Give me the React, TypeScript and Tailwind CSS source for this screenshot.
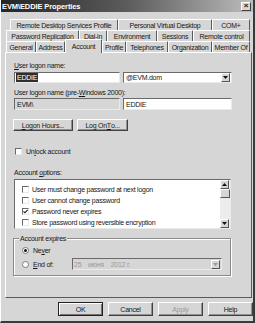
import React from 'react';

const font = "font-['Liberation_Sans',Arial,sans-serif]";

type Tab = { label: string; w: string; active?: boolean };

const row1: Tab[] = [
  { label: 'Remote Desktop Services Profile', w: 'w-[108px]' },
  { label: 'Personal Virtual Desktop', w: 'w-[94px]' },
  { label: 'COM+', w: 'w-[38px]' },
];
const row2: Tab[] = [
  { label: 'Password Replication', w: 'w-[73px]' },
  { label: 'Dial-in', w: 'w-[28px]' },
  { label: 'Environment', w: 'w-[50px]' },
  { label: 'Sessions', w: 'w-[36px]' },
  { label: 'Remote control', w: 'w-[57px]' },
];
const row3: Tab[] = [
  { label: 'General', w: 'w-[30px]' },
  { label: 'Address', w: 'w-[29px]' },
  { label: 'Account', w: 'w-[37px]', active: true },
  { label: 'Profile', w: 'w-[24px]' },
  { label: 'Telephones', w: 'w-[42px]' },
  { label: 'Organization', w: 'w-[44px]' },
  { label: 'Member Of', w: 'w-[38px]' },
];

function TabRow({ tabs, pad }: { tabs: Tab[]; pad: string }) {
  return (
    <div className={`flex h-[11px] ${pad}`}>
      {tabs.map((t) => (
        <div
          key={t.label}
          className={`${t.w} shrink-0 flex items-center justify-center whitespace-nowrap border-t border-l border-white border-r border-r-[#5a5a5a] rounded-t-[1px] ${
            t.active ? 'relative -mt-[2px] h-[14px] z-10 bg-[#d6d6d6]' : 'h-[11px]'
          }`}
        >
          {t.label}
        </div>
      ))}
    </div>
  );
}

function Check({ checked }: { checked?: boolean }) {
  return (
    <span className="w-[7px] h-[7px] shrink-0 bg-white border border-t-[#6a6a6a] border-l-[#6a6a6a] border-r-[#e8e8e8] border-b-[#e8e8e8] flex items-center justify-center">
      {checked && (
        <svg width="5" height="5" viewBox="0 0 5 5">
          <path d="M0.5 2.3 L2 3.8 L4.6 0.8" stroke="#111" strokeWidth="1.1" fill="none" />
        </svg>
      )}
    </span>
  );
}

function Radio({ on }: { on?: boolean }) {
  return (
    <span className="w-[7px] h-[7px] shrink-0 rounded-full bg-white border border-[#7a7a7a] flex items-center justify-center">
      {on && <span className="w-[3px] h-[3px] rounded-full bg-[#111]" />}
    </span>
  );
}

function Arrow({ dir, disabled }: { dir: 'up' | 'down'; disabled?: boolean }) {
  return (
    <span className="w-[9px] h-[9px] shrink-0 bg-[#d6d6d6] border border-t-white border-l-white border-r-[#555] border-b-[#555] flex items-center justify-center">
      <svg width="5" height="3" viewBox="0 0 5 3">
        <path d={dir === 'down' ? 'M0 0 H5 L2.5 3 Z' : 'M0 3 H5 L2.5 0 Z'} fill={disabled ? '#999' : '#111'} />
      </svg>
    </span>
  );
}

function Btn({ children, w, def, disabled }: { children: React.ReactNode; w: string; def?: boolean; disabled?: boolean }) {
  return (
    <div
      className={`${w} h-full shrink-0 flex items-center justify-center bg-[#d6d6d6] ${
        def ? 'border border-[#222] shadow-[inset_1px_1px_0_#fff,inset_-1px_-1px_0_#707070]' : 'border border-t-white border-l-white border-r-[#404040] border-b-[#404040] shadow-[inset_-1px_-1px_0_#909090]'
      } ${disabled ? 'text-[#9a9a9a]' : ''}`}
    >
      {children}
    </div>
  );
}

export default function App() {
  return (
    <div className={`w-[255px] h-[323px] overflow-hidden bg-[#d6d6d6] text-[7px] leading-[9px] tracking-[-0.25px] text-[#161616] ${font} flex flex-col border-l border-white border-r-2 border-r-[#3a3a3a] border-b-2 border-b-[#3a3a3a]`}>
      {/* title bar */}
      <div className="h-[12px] shrink-0 flex items-center justify-between pl-[1px] pr-[2px] bg-gradient-to-r from-[#262626] via-[#5c5c5c] to-[#bdbdbd]">
        <span className="text-white font-bold text-[7.5px] tracking-[-0.1px]">EVM\EDDIE Properties</span>
        <span className="w-[10px] h-[9px] bg-[#d6d6d6] border border-t-white border-l-white border-r-[#404040] border-b-[#404040] flex items-center justify-center font-bold text-[8px] leading-none">×</span>
      </div>

      {/* tabs */}
      <div className="mt-[7px] flex flex-col">
        <TabRow tabs={row1} pad="pl-[9px]" />
        <TabRow tabs={row2} pad="pl-[5px]" />
        <TabRow tabs={row3} pad="pl-[5px]" />
      </div>

      {/* page */}
      <div className="ml-[4px] w-[247px] h-[246px] border border-t-white border-l-white border-r-[#5a5a5a] border-b-[#5a5a5a] flex flex-col pl-[8px]">
        <div className="mt-[8px]"><u>U</u>ser logon name:</div>
        <div className="mt-[2px] flex gap-[3px] h-[11px]">
          <div className="w-[106px] bg-white border border-t-[#6a6a6a] border-l-[#6a6a6a] border-r-[#eaeaea] border-b-[#eaeaea] flex items-center pl-[1px]">
            <span className="bg-[#2e2e2e] text-white px-[1px]">EDDIE</span>
          </div>
          <div className="w-[109px] bg-white border border-t-[#6a6a6a] border-l-[#6a6a6a] border-r-[#eaeaea] border-b-[#eaeaea] flex items-center justify-between pl-[2px] pr-[1px]">
            <span>@EVM.dom</span>
            <Arrow dir="down" />
          </div>
        </div>
        <div className="mt-[5px]">User logon name (pre-<u>W</u>indows 2000):</div>
        <div className="mt-[1px] flex gap-[3px] h-[12px]">
          <div className="w-[106px] bg-[#d6d6d6] border border-t-[#6a6a6a] border-l-[#6a6a6a] border-r-[#eaeaea] border-b-[#eaeaea] flex items-center pl-[2px]">EVM\</div>
          <div className="w-[109px] bg-white border border-t-[#6a6a6a] border-l-[#6a6a6a] border-r-[#eaeaea] border-b-[#eaeaea] flex items-center pl-[2px]">EDDIE</div>
        </div>
        <div className="mt-[9px] flex gap-[4px] h-[12px] -ml-[1px]">
          <Btn w="w-[60px]"><u>L</u>ogon Hours...</Btn>
          <Btn w="w-[51px]">Log On <u>T</u>o...</Btn>
        </div>
        <div className="mt-[16px] flex items-center gap-[4px] ml-[1px]">
          <Check />
          <span>Un<u>l</u>ock account</span>
        </div>
        <div className="mt-[12px]">Account <u>o</u>ptions:</div>
        <div className="mt-[2px] w-[217px] h-[50px] bg-white border border-t-[#6a6a6a] border-l-[#6a6a6a] border-r-[#eaeaea] border-b-[#eaeaea] flex">
          <div className="flex-1 flex flex-col pl-[7px] pt-[5px] gap-[2px]">
            {[
              ['User must change password at next logon', false],
              ['User cannot change password', false],
              ['Password never expires', true],
              ['Store password using reversible encryption', false],
            ].map(([t, c]) => (
              <div key={t as string} className="flex items-center gap-[3px] h-[9px] whitespace-nowrap">
                <Check checked={c as boolean} />
                <span>{t as string}</span>
              </div>
            ))}
          </div>
          <div className="w-[10px] flex flex-col bg-[#ececec]">
            <Arrow dir="up" />
            <div className="h-[9px] bg-[#d6d6d6] border border-t-white border-l-white border-r-[#555] border-b-[#555]" />
            <div className="flex-1" />
            <Arrow dir="down" />
          </div>
        </div>

        {/* account expires group */}
        <div className="relative mt-[9px] w-[218px] h-[38px] -ml-[1px] border border-[#8a8a8a] shadow-[1px_1px_0_#fff,inset_1px_1px_0_#fff] flex flex-col pl-[8px] pt-[7px]">
          <span className="absolute -top-[5px] left-[5px] bg-[#d6d6d6] px-[1px]">Account expires</span>
          <div className="flex items-center gap-[4px]">
            <Radio on />
            <span>Ne<u>v</u>er</span>
          </div>
          <div className="mt-[3px] flex items-center gap-[4px]">
            <Radio />
            <span className="w-[35px]"><u>E</u>nd of:</span>
            <div className="w-[150px] h-[12px] bg-[#d6d6d6] border border-t-[#6a6a6a] border-l-[#6a6a6a] border-r-[#eaeaea] border-b-[#eaeaea] flex items-center justify-between pl-[1px] pr-[1px] text-[#9a9a9a]">
              <span className="whitespace-pre">25    июня    2012 г.</span>
              <Arrow dir="down" disabled />
            </div>
          </div>
        </div>
      </div>

      {/* dialog buttons */}
      <div className="mt-[4px] h-[14px] flex gap-[5px] pl-[57px]">
        <Btn w="w-[45px]" def>OK</Btn>
        <Btn w="w-[45px]">Cancel</Btn>
        <Btn w="w-[45px]" disabled>Apply</Btn>
        <Btn w="w-[45px]">Help</Btn>
      </div>
    </div>
  );
}
